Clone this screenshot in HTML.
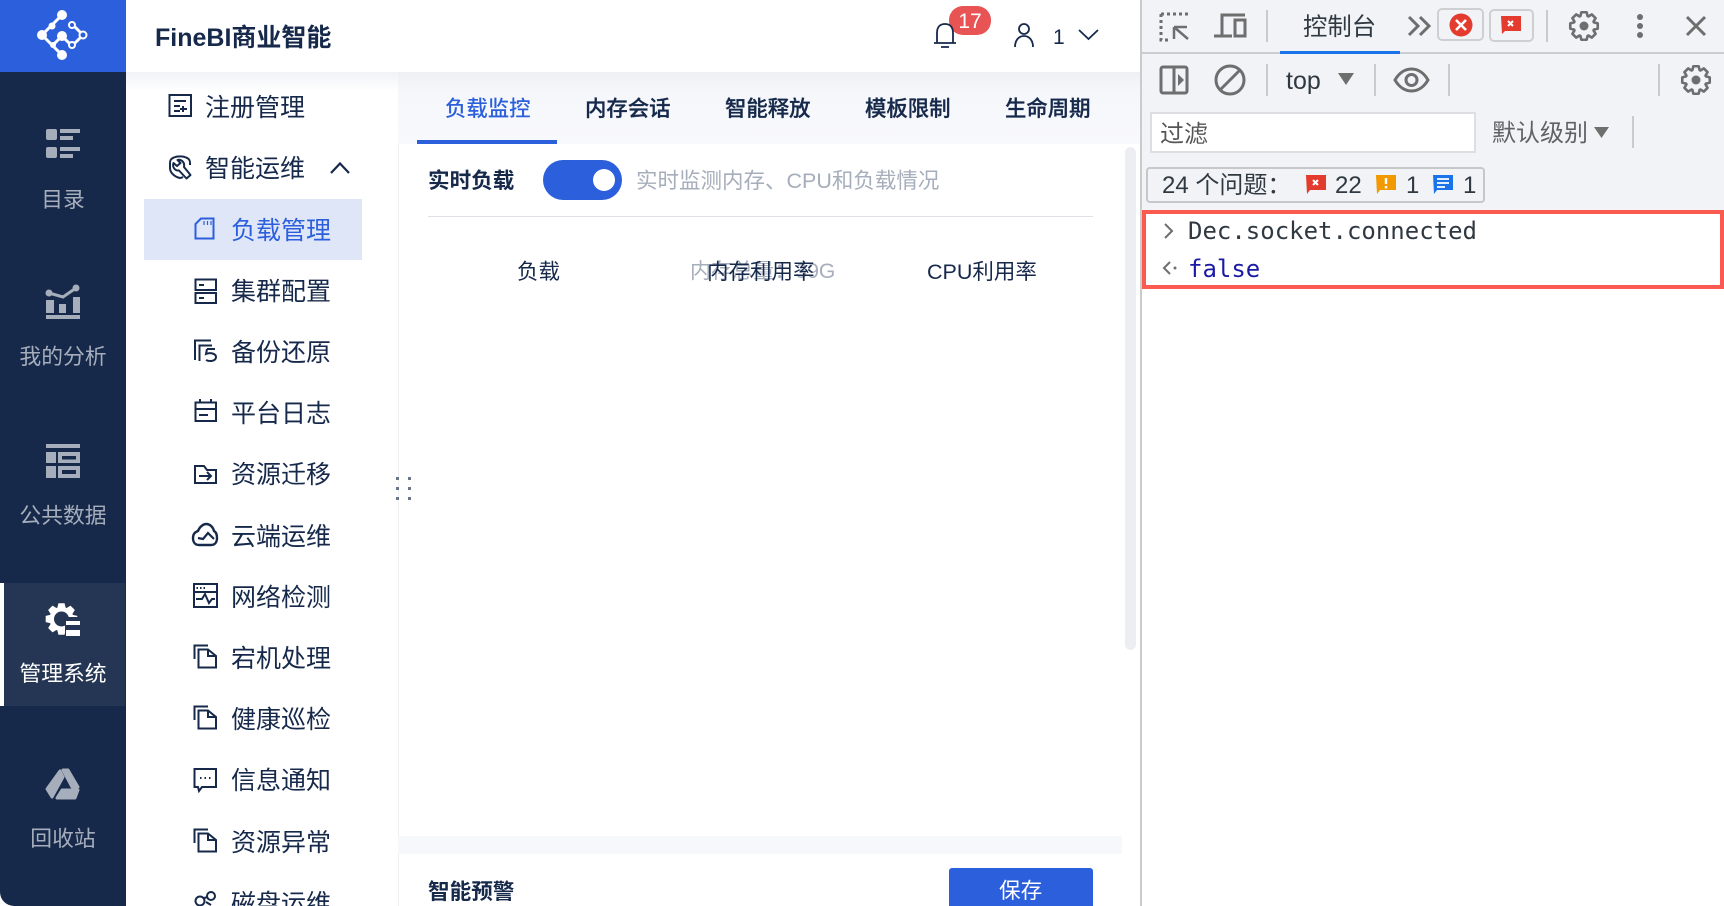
<!DOCTYPE html>
<html lang="zh"><head><meta charset="utf-8"><title>FineBI</title>
<style>
html,body{margin:0;padding:0;width:1724px;height:906px;overflow:hidden;background:#fff}
body{position:relative;font-family:"Liberation Sans","Noto Sans CJK SC",sans-serif;color:#16294b}
.t{position:absolute;white-space:nowrap;line-height:30px;height:30px}
.b{position:absolute}
.nl{font-size:21.8px;color:#a6adbb;width:126px;text-align:center;left:0}
.i{font-size:25px;left:231px}
.tab{font-size:21.4px;font-weight:500;-webkit-text-stroke:.3px #16294b}
.d{font-size:24px;color:#303942}
svg{position:absolute;left:0;top:0}
</style></head><body>
<div class="b" style="left:0;top:0;width:126px;height:906px;background:#16294b;border-bottom-left-radius:14px"></div>
<div class="b" style="left:0;top:0;width:126px;height:72px;background:#2b5fdb"></div>
<div class="b" style="left:0;top:583px;width:4px;height:123px;background:#fff"></div>
<div class="b" style="left:4px;top:583px;width:121px;height:123px;background:#243654"></div>
<div class="b" style="left:126px;top:72px;width:272px;height:20px;background:linear-gradient(#f1f2f5,#fff)"></div>
<div class="b" style="left:398px;top:72px;width:742px;height:72px;background:linear-gradient(#eef0f4,#f6f7fb 30%,#f8f9fd)"></div>
<div class="b" style="left:398px;top:144px;width:1px;height:762px;background:#efefef"></div>
<div class="b" style="left:144px;top:199px;width:218px;height:61px;background:#dfe6f8"></div>
<div class="b" style="left:417px;top:140px;width:140px;height:4px;background:#2b5fdb"></div>
<div class="b" style="left:1125px;top:147px;width:11px;height:503px;background:#eceef1;border-radius:6px"></div>
<div class="b" style="left:428px;top:216px;width:665px;height:1px;background:#dfe1e6"></div>
<div class="b" style="left:398px;top:836px;width:724px;height:18px;background:#f7f8fc"></div>
<div class="b" style="left:949px;top:868px;width:144px;height:38px;background:#2b5fdb;border-radius:3px 3px 0 0"></div>
<div class="b" style="left:543px;top:160px;width:79px;height:40px;background:#2b5fdb;border-radius:20px"></div>
<div class="b" style="left:593px;top:169px;width:22px;height:22px;background:#fff;border-radius:11px"></div>
<div class="b" style="left:949px;top:6px;width:42px;height:29px;background:#e85454;border-radius:14px"></div>

<!-- devtools -->
<div class="b" style="left:1140px;top:0;width:584px;height:906px;background:#fff;border-left:2px solid #cbcbcb;box-sizing:border-box"></div>
<div class="b" style="left:1142px;top:0;width:582px;height:210px;background:#f1f3f6"></div>
<div class="b" style="left:1142px;top:52px;width:582px;height:2px;background:#cbcdd1"></div>
<div class="b" style="left:1280px;top:51px;width:120px;height:3px;background:#1a73e8"></div>
<div class="b" style="left:1437px;top:8px;width:47px;height:33px;box-sizing:border-box;border:2px solid #cdcfd2;border-radius:5px"></div>
<div class="b" style="left:1489px;top:9px;width:45px;height:33px;box-sizing:border-box;border:2px solid #cdcfd2;border-radius:5px"></div>
<div class="b" style="left:1150px;top:112px;width:326px;height:41px;box-sizing:border-box;background:#fff;border:2px solid #dcdee1"></div>
<div class="b" style="left:1146px;top:167px;width:339px;height:36px;box-sizing:border-box;border:2px solid #c6c7c9;border-radius:4px"></div>
<div class="b" style="left:1142px;top:210px;width:582px;height:79px;box-sizing:border-box;border:4px solid #fb5a50;background:#fff"></div>

<svg width="1724" height="906" viewBox="0 0 1724 906" fill="none">
<!-- logo -->
<g stroke="#fff" stroke-width="3"><path d="M62 15L42 35L62 55M53 45L62 36L69 43M75 27L81 33M81 37L75 43"/></g>
<g fill="#fff"><circle cx="62" cy="15" r="5"/><circle cx="52" cy="26" r="3.500"/><circle cx="42" cy="35" r="5"/><circle cx="62" cy="36" r="5"/><circle cx="53" cy="45" r="3"/><circle cx="62" cy="55" r="5"/></g>
<g stroke="#fff" stroke-width="2"><circle cx="72" cy="25" r="3"/><circle cx="83" cy="35" r="3.500"/><circle cx="72" cy="45" r="3"/></g>
<!-- nav icons -->
<g fill="#a6adbb">
<rect x="46" y="129" width="11" height="11" rx="2"/><rect x="46" y="147" width="11" height="11" rx="2"/>
<rect x="60" y="129" width="20" height="4"/><rect x="60" y="136" width="13" height="4"/><rect x="60" y="147" width="20" height="4"/><rect x="60" y="154" width="13" height="4"/>
<rect x="46" y="300" width="8" height="13"/><rect x="59" y="304" width="7" height="9"/><rect x="73" y="297" width="7" height="16"/><rect x="46" y="315" width="34" height="4"/>
<circle cx="49" cy="293" r="3.500"/><circle cx="76" cy="288" r="3.500"/>
<rect x="46" y="444" width="34" height="4"/><rect x="46" y="452" width="10" height="11"/><rect x="46" y="466" width="10" height="12"/>
<path fill-rule="evenodd" d="M58 452H80V463H58ZM62 456V459.500H76V456ZM58 466H80V478H58ZM62 470V474H76V470Z"/>
</g>
<path d="M49 293L63 297L76 288" stroke="#a6adbb" stroke-width="3"/>
<g fill="#a6adbb" stroke="#a6adbb" stroke-width="3" stroke-linejoin="round"><path d="M60 771L47 789L52 797L63 777Z"/><path d="M63 770H68L78 787H72Z"/><path d="M62 790H78L75 798H57Z"/></g>
<!-- gear nav -->
<path transform="translate(61.500 619) scale(1.150)" fill="#fff" d="M-3.590-9.870L-2.670-13.740H2.670L3.590-9.870L4.440-9.520L7.830-11.600L11.600-7.830L9.520-4.440L9.870-3.590L13.740-2.670V2.670L9.870 3.590L9.520 4.440L11.600 7.830L7.830 11.600L4.440 9.520L3.590 9.870L2.670 13.740H-2.670L-3.590 9.870L-4.440 9.520L-7.830 11.600L-11.600 7.830L-9.520 4.440L-9.870 3.590L-13.740 2.670V-2.670L-9.870-3.590L-9.520-4.440L-11.600-7.830L-7.830-11.600L-4.440-9.520Z"/>
<circle cx="61.500" cy="619" r="7.500" fill="#243654"/>
<rect x="65" y="617" width="19" height="23" fill="#243654"/>
<path d="M66 621H80V625H66ZM66 630H80V636H66Z" fill="#fff"/>
<!-- sec nav icons -->
<g stroke="#16294b" stroke-width="2">
<path d="M169.500 95H191V116H169.500ZM174 101H186M174 106H180M174 111H180M183 106V112M180 109H187"/>
<path d="M174 157.500C177 156 183 156 186 157.500C189 158.500 190 160 190 163V165M170 163C170 160 171 158.500 174 157.500M170 163V168C170 173 175 177 180 178C181 178 182 177.500 183 177"/>
<path d="M190.500 175L186.500 178.500L179 170.500C175 171 172 167 173.500 163L177 166L180.500 163L177.500 160C181 159 185 162 184 167Z" stroke-linejoin="round"/>
<path d="M195.500 279.500H216V290H195.500ZM195.500 293H216V303H195.500Z"/><path d="M199 285H204M199 298H204"/>
<path d="M195 360V340.500H211M199.500 361V345.500H212M207 349H215M207 349L206 354C211 352 216 354 216 357C216 361 210 362 206 360"/>
<path d="M195.500 402.500H216V421H195.500ZM195.500 409H216M200 399V403M211 399V403M199 415H208"/>
<path d="M195 466H204L207 470H216V483H195ZM199 476H211M207 472L211 476L207 480"/>
<path d="M199 545C195 545 193 542 193 538C193 534 195 532 198 531C200 526 204 524 206 524C210 524 213 527 214 531C216 532 217 535 217 538C217 542 215 545 211 545Z" stroke-width="2.400"/>
<path d="M198 538L203 539L208 533L214 539" stroke-width="2.200"/>
<path d="M194 584H217V607H194ZM194 592H217M196 599H202L205 594L209 603L212 599H215"/>
<path d="M196.500 588H198M200 588H201.500M203.500 588H205" stroke-width="2"/>
<path d="M194.500 659V645.500H208M198.500 649.500H208L216 656V667.500H198.500ZM208 650V656H215"/>
<path d="M194.500 720V706.500H208M198.500 710.500H208L216 717V728.500H198.500ZM208 711V717H215"/>
<path d="M194.500 843V829.500H208M198.500 833.500H208L216 840V851.500H198.500ZM208 834V840H215"/>
<path d="M194.500 769H216V787H202L199 791L198 787H194.500Z"/>
<path d="M200 778H201.500M204.500 778H206M209 778H210.500"/>
<circle cx="200" cy="901" r="4.500"/><circle cx="211" cy="896" r="4"/><path d="M204 898L208 897M206 902L211 905"/>
<path d="M331 173L340 163.500L349 173" stroke-width="2.200"/>
</g>
<path d="M195.500 238.500H213.500V218.500H201L195.500 224Z" stroke="#2b5fdb" stroke-width="2"/>
<path d="M204 221V225M207.500 221V225M211 221V225" stroke="#2b5fdb" stroke-width="1.200"/>
<!-- drag dots -->
<g fill="#6b7588"><rect x="396" y="477" width="3" height="3"/><rect x="396" y="487" width="3" height="3"/><rect x="396" y="497" width="3" height="3"/><rect x="408" y="477" width="3" height="3"/><rect x="408" y="487" width="3" height="3"/><rect x="408" y="497" width="3" height="3"/></g>
<!-- header icons -->
<g stroke="#16294b" stroke-width="1.800">
<path d="M934 43H956M937 43V33C937 27 940 24 945 24C950 24 953 27 953 33V43M941 47H949"/>
<circle cx="1024" cy="29" r="5"/><path d="M1015 47C1015 40 1019 36 1024 36C1029 36 1033 40 1033 47"/>
<path d="M1079 30L1088.500 39L1098 30"/>
</g>
<!-- devtools icons -->
<g stroke="#6e6e6e" stroke-width="3">
<path d="M1161 14H1188M1161 14V40H1168" stroke-dasharray="3 3"/><path d="M1174 27H1187M1174 27V39M1174 27L1188 39" stroke-width="2.500"/>
<path d="M1245 15H1222V35M1214 36H1232"/><rect x="1235" y="20" width="10" height="16"/>
<path d="M1409 17L1418 26L1409 35M1420 17L1429 26L1420 35"/>
<rect x="1161" y="67" width="26" height="26" rx="2"/><path d="M1174 67V93"/><path d="M1178 74L1184 80L1178 86Z" fill="#6e6e6e" stroke="none"/>
<circle cx="1230" cy="80" r="14"/><path d="M1220 90L1240 70"/>
<path d="M1395 80C1399 73 1405 69 1411.500 69C1418 69 1424 73 1428 80C1424 87 1418 91 1411.500 91C1405 91 1399 87 1395 80Z"/><circle cx="1411.500" cy="80" r="5.500"/>
<path d="M1687 17L1705 35M1705 17L1687 35"/>
<path d="M1165 224L1172 231L1165 238" stroke-width="2"/><path d="M1170 262L1164 268L1170 274" stroke-width="2"/>
</g>
<circle cx="1175" cy="268" r="1.500" fill="#6e6e6e"/>
<g stroke="#c8cacd" stroke-width="2"><path d="M1267 10V42M1547 10V42M1267 64V96M1375 64V96M1449 64V96M1659 64V96M1633 116V148"/></g>
<g fill="#6e6e6e"><circle cx="1640" cy="17" r="3"/><circle cx="1640" cy="26" r="3"/><circle cx="1640" cy="35" r="3"/><path d="M1338 73H1354L1346 85Z"/><path d="M1594 127H1609L1601.500 138Z"/></g>
<g stroke="#6e6e6e" stroke-width="2.600" stroke-linejoin="round">
<path transform="translate(1584 26)" d="M-3.590-9.870L-2.670-13.740H2.670L3.590-9.870L4.440-9.520L7.830-11.600L11.600-7.830L9.520-4.440L9.870-3.590L13.740-2.670V2.670L9.870 3.590L9.520 4.440L11.600 7.830L7.830 11.600L4.440 9.520L3.590 9.870L2.670 13.740H-2.670L-3.590 9.870L-4.440 9.520L-7.830 11.600L-11.600 7.830L-9.520 4.440L-9.870 3.590L-13.740 2.670V-2.670L-9.870-3.590L-9.520-4.440L-11.600-7.830L-7.830-11.600L-4.440-9.520Z"/>
<path transform="translate(1696 80)" d="M-3.590-9.870L-2.670-13.740H2.670L3.590-9.870L4.440-9.520L7.830-11.600L11.600-7.830L9.520-4.440L9.870-3.590L13.740-2.670V2.670L9.870 3.590L9.520 4.440L11.600 7.830L7.830 11.600L4.440 9.520L3.590 9.870L2.670 13.740H-2.670L-3.590 9.870L-4.440 9.520L-7.830 11.600L-11.600 7.830L-9.520 4.440L-9.870 3.590L-13.740 2.670V-2.670L-9.870-3.590L-9.520-4.440L-11.600-7.830L-7.830-11.600L-4.440-9.520Z"/>
</g>
<circle cx="1584" cy="26" r="4.500" fill="#6e6e6e"/><circle cx="1696" cy="80" r="4.500" fill="#6e6e6e"/>
<circle cx="1461" cy="25" r="11.500" fill="#e33b2e"/><path d="M1456 20L1466 30M1466 20L1456 30" stroke="#fff" stroke-width="2.600"/>
<path d="M1501 16H1521V31H1505L1502 34Z" fill="#e33b2e"/><path d="M1508 21L1513 26M1513 21L1508 26" stroke="#fff" stroke-width="2"/>
<path d="M1306 175H1326V190H1310L1307 194Z" fill="#e33b2e"/><path d="M1313 180L1318 185M1318 180L1313 185" stroke="#fff" stroke-width="2"/>
<path d="M1376 175H1396V190H1380L1377 194Z" fill="#f29900"/><path d="M1386 178V184M1386 186V188.500" stroke="#fff" stroke-width="2.400"/>
<path d="M1433 175H1453V190H1437L1434 194Z" fill="#1a73e8"/><path d="M1437 179H1449M1437 183H1449M1437 187H1445" stroke="#fff" stroke-width="1.800"/>
</svg>

<!-- text -->
<div class="t" style="left:155px;top:22.500px;font-size:25px;font-weight:700">FineBI商业智能</div>
<div class="t nl" style="top:185px">目录</div>
<div class="t nl" style="top:342px">我的分析</div>
<div class="t nl" style="top:501px">公共数据</div>
<div class="t nl" style="top:659px;color:#fff">管理系统</div>
<div class="t nl" style="top:824px">回收站</div>
<div class="t i" style="left:205px;top:93px">注册管理</div>
<div class="t i" style="left:205px;top:154px">智能运维</div>
<div class="t i" style="top:216px;color:#2b5fdb">负载管理</div>
<div class="t i" style="top:277px">集群配置</div>
<div class="t i" style="top:338px">备份还原</div>
<div class="t i" style="top:399px">平台日志</div>
<div class="t i" style="top:460px">资源迁移</div>
<div class="t i" style="top:522px">云端运维</div>
<div class="t i" style="top:583px">网络检测</div>
<div class="t i" style="top:644px">宕机处理</div>
<div class="t i" style="top:705px">健康巡检</div>
<div class="t i" style="top:766px">信息通知</div>
<div class="t i" style="top:828px">资源异常</div>
<div class="t i" style="top:889px">磁盘运维</div>
<div class="t tab" style="left:445px;top:94px;color:#2b5fdb;-webkit-text-stroke:0">负载监控</div>
<div class="t tab" style="left:585px;top:94px">内存会话</div>
<div class="t tab" style="left:725px;top:94px">智能释放</div>
<div class="t tab" style="left:865px;top:94px">模板限制</div>
<div class="t tab" style="left:1005px;top:94px">生命周期</div>
<div class="t" style="left:428px;top:166px;font-size:21.6px;font-weight:700">实时负载</div>
<div class="t" style="left:636px;top:166px;font-size:21.5px;color:#a6adbb">实时监测内存、CPU和负载情况</div>
<div class="t" style="left:517px;top:257px;font-size:21.5px">负载</div>
<div class="t" style="left:690px;top:257px;font-size:21.1px;color:#a6adbb">内存总量：39G</div>
<div class="t" style="left:707px;top:257px;font-size:21.5px">内存利用率</div>
<div class="t" style="left:927px;top:257px;font-size:21.5px">CPU利用率</div>
<div class="t" style="left:428px;top:876.500px;font-size:21.6px;font-weight:700">智能预警</div>
<div class="t" style="left:999px;top:876px;font-size:21.6px;color:#fff">保存</div>
<div class="t" style="left:949px;top:7px;width:42px;text-align:center;font-size:21px;color:#fff">17</div>
<div class="t" style="left:1053px;top:23px;font-size:21px">1</div>
<div class="t d" style="left:1303px;top:13px;font-size:24.4px">控制台</div>
<div class="t d" style="left:1286px;top:66px;font-size:25px">top</div>
<div class="t d" style="left:1160px;top:120px;color:#555">过滤</div>
<div class="t d" style="left:1492px;top:119px;color:#5f6368">默认级别</div>
<div class="t d" style="left:1162px;top:171px">24 个问题：</div>
<div class="t d" style="left:1335px;top:171px">22</div>
<div class="t d" style="left:1406px;top:171px">1</div>
<div class="t d" style="left:1463px;top:171px">1</div>
<div class="t d" style="left:1188px;top:216px;font-family:'DejaVu Sans Mono',monospace">Dec.socket.connected</div>
<div class="t d" style="left:1188px;top:254px;font-family:'DejaVu Sans Mono',monospace;color:#1a1aa6">false</div>
</body></html>
